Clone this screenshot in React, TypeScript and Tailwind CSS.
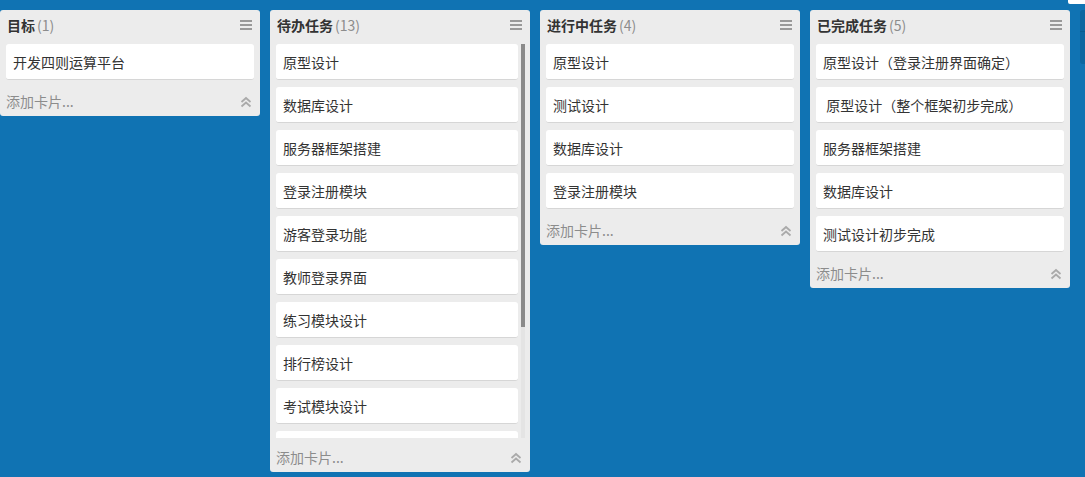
import React from "react";

type ListData = { title: string; cards: string[]; scroll?: boolean };

const lists: ListData[] = [
  { title: "目标", cards: ["开发四则运算平台"] },
  {
    title: "待办任务",
    scroll: true,
    cards: [
      "原型设计",
      "数据库设计",
      "服务器框架搭建",
      "登录注册模块",
      "游客登录功能",
      "教师登录界面",
      "练习模块设计",
      "排行榜设计",
      "考试模块设计",
      "错题本设计",
      "个人中心设计",
      "系统测试",
      "部署上线",
    ],
  },
  { title: "进行中任务", cards: ["原型设计", "测试设计", "数据库设计", "登录注册模块"] },
  {
    title: "已完成任务",
    cards: ["原型设计（登录注册界面确定）", " 原型设计（整个框架初步完成）", "服务器框架搭建", "数据库设计", "测试设计初步完成"],
  },
];

const font = { fontFamily: '"Microsoft YaHei", "Noto Sans CJK SC", "Noto Sans", sans-serif' };

function MenuIcon() {
  return (
    <svg width="12" height="10" viewBox="0 0 12 10" className="block">
      <rect x="0" y="0" width="12" height="2" fill="#999" />
      <rect x="0" y="4" width="12" height="2" fill="#999" />
      <rect x="0" y="8" width="12" height="2" fill="#999" />
    </svg>
  );
}

function ChevronsUp() {
  return (
    <svg width="12" height="12" viewBox="0 0 12 12" className="block">
      <path d="M1.5 6 L6 2 L10.5 6" fill="none" stroke="#aaa" strokeWidth="1.8" />
      <path d="M1.5 10.5 L6 6.5 L10.5 10.5" fill="none" stroke="#aaa" strokeWidth="1.8" />
    </svg>
  );
}

function Card({ text }: { text: string }) {
  return (
    <div className="h-[36px] mb-[7px] shrink-0 rounded-[3px] bg-white border-b border-[#d6d6d6] px-[7px] pt-[1px] flex items-center text-[14px] text-[#333] whitespace-pre">
      {text}
    </div>
  );
}

function List({ data }: { data: ListData }) {
  return (
    <div className="w-[260px] shrink-0 rounded-[3px] bg-[#ececec] flex flex-col self-start">
      <div className="h-[34px] shrink-0 flex items-start justify-between pl-[7px] pr-[8px] pt-[5px]">
        <div className="text-[14px] leading-[20px]">
          <span className="font-bold text-[#333]">{data.title}</span>
          <span className="text-[#8c8c8c] ml-[2px]">({data.cards.length})</span>
        </div>
        <div className="pt-[5px]">
          <MenuIcon />
        </div>
      </div>
      {data.scroll ? (
        <div className="h-[394px] shrink-0 flex overflow-hidden">
          <div className="flex-1 min-w-0 flex flex-col pl-[6px] pr-[3px] overflow-hidden">
            {data.cards.slice(0, 9).map((c, i) => (
              <Card key={i} text={c} />
            ))}
            <Card text="" />
          </div>
          <div className="w-[9px] shrink-0 flex justify-start pr-[1px]">
            <div className="w-[4px] bg-[#e4e4e4] h-full relative">
              <div className="absolute left-0 top-0 w-[4px] h-[283px] bg-[#8a8a8a]" />
            </div>
          </div>
        </div>
      ) : (
        <div className="flex flex-col px-[6px]">
          {data.cards.map((c, i) => (
            <Card key={i} text={c} />
          ))}
        </div>
      )}
      {data.scroll ? (
        <div className="h-[34px] shrink-0 flex items-center justify-between pl-[6px] pr-[8px] pt-[5px]">
          <span className="text-[14px] text-[#8c8c8c]">添加卡片...</span>
          <ChevronsUp />
        </div>
      ) : (
        <div className="h-[29px] shrink-0 flex items-center justify-between pl-[6px] pr-[8px]">
          <span className="text-[14px] text-[#8c8c8c]">添加卡片...</span>
          <ChevronsUp />
        </div>
      )}
    </div>
  );
}

export default function App() {
  return (
    <div className="relative w-full h-[477px] bg-[#1073b3] overflow-hidden" style={font}>
      <div className="flex gap-[10px] pt-[10px] items-start">
        {lists.map((l, i) => (
          <List key={i} data={l} />
        ))}
        <div className="w-[200px] h-[54px] shrink-0 rounded-[3px] bg-[#0c66a0] flex flex-col">
          <div className="h-[22px] border-b border-[#0a5b8f]" />
        </div>
      </div>
      <div className="absolute top-0 left-[1068px] w-[20px] h-[4px] bg-white rounded-b-[2px]" />
    </div>
  );
}
